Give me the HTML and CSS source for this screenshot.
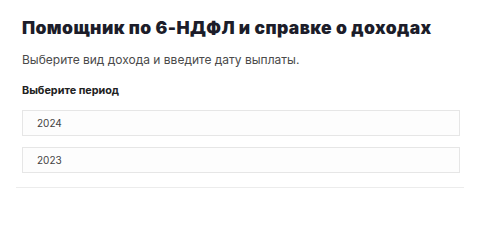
FILE: index.html
```html
<!DOCTYPE html>
<html lang="ru">
<head>
<meta charset="utf-8">
<link rel="stylesheet" href="styles.css">
</head>
<body>
<div class="page">
  <div class="content">
    <h1 class="title">Помощник по 6-НДФЛ и справке о доходах</h1>
    <p class="lead">Выберите вид дохода и введите дату выплаты.</p>
    <div class="label">Выберите период</div>
    <div class="options">
      <div class="option">2024</div>
      <div class="option">2023</div>
    </div>
  </div>
  <div class="divider"></div>
</div>
</body>
</html>
```

FILE: styles.css
```css
html, body {
  margin: 0;
  padding: 0;
  background: #ffffff;
}
.page {
  width: 480px;
  height: 205px;
  padding-top: 16px;
  box-sizing: border-box;
}
.content {
  padding-left: 22px;
  width: 438px;
}
.title {
  margin: 0;
  font-family: Inter, "Open Sans", sans-serif;
  font-weight: 900;
  font-size: 17.5px;
  line-height: 24px;
  letter-spacing: 0.4px;
  color: #1c1d2a;
  white-space: nowrap;
}
.lead {
  margin: 11px 0 0 0;
  font-family: Inter, "Noto Sans", sans-serif;
  font-size: 12px;
  line-height: 18px;
  color: #4a4a4a;
}
.label {
  margin-top: 15px;
  font-family: Inter, "Noto Sans", sans-serif;
  font-weight: 700;
  font-size: 10.8px;
  line-height: 14px;
  color: #222;
}
.options {
  margin-top: 12px;
  display: flex;
  flex-direction: column;
  gap: 11px;
}
.option {
  height: 26px;
  box-sizing: border-box;
  border: 1px solid #e6e6e6;
  background: #fdfdfd;
  padding-left: 14px;
  font-family: Inter, "Noto Sans", sans-serif;
  font-size: 10px;
  line-height: 24px;
  color: #444;
}
.divider {
  margin: 14px 0 0 16px;
  width: 448px;
  height: 1px;
  background: #ececec;
}
```
